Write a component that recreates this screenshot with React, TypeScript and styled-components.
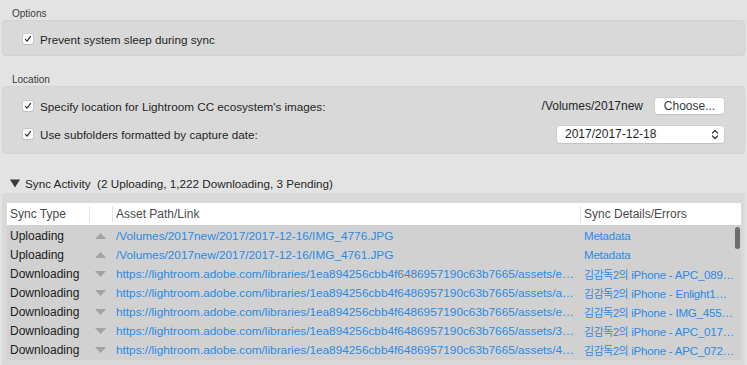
import React from "react";
import styled, { createGlobalStyle } from "styled-components";

const GlobalCSS = createGlobalStyle`
    html, body {
        margin: 0;
        padding: 0;
        background: #e3e3e3;
    }
    body {
        font-family: "Liberation Sans", "Noto Sans CJK KR", sans-serif;
        color: #262626;
        font-size: 12px;
    }
`;

const PageCSS = styled.div`
    width: 747px;
    height: 365px;
    overflow: hidden;
    padding: 0 2px;
    box-sizing: border-box;
    display: flex;
    flex-direction: column;
`;

const SectionLabelCSS = styled.div<{ $top: number }>`
    padding: ${(p) => p.$top}px 0 1px 10px;
    font-size: 10px;
    line-height: 10px;
    color: #3a3a3a;
`;

const GroupBoxCSS = styled.div<{ $padTop: number; $padBottom: number }>`
    background: #d9d9d9;
    border: 1px solid #d2d2d2;
    border-radius: 4px;
    padding: ${(p) => p.$padTop}px 20px ${(p) => p.$padBottom}px 20px;
    display: flex;
    flex-direction: column;
    gap: 8px;
`;

const OptionRowCSS = styled.div`
    height: 20px;
    display: flex;
    align-items: center;
    justify-content: space-between;
`;

const CheckLabelCSS = styled.label`
    display: flex;
    align-items: center;
    gap: 7px;
    font-size: 11.7px;
    color: #262626;
`;

const CheckBoxCSS = styled.span`
    width: 10px;
    height: 10px;
    border-radius: 2px;
    background: #ffffff;
    box-shadow: 0 0 0 0.5px #b8b8b8, 0 1px 1px rgba(0, 0, 0, 0.12);
    display: flex;
    align-items: center;
    justify-content: center;
`;

const RightGroupCSS = styled.div`
    display: flex;
    align-items: center;
    gap: 12px;
`;

const PathTextCSS = styled.span`
    font-size: 12px;
    color: #262626;
`;

const ButtonCSS = styled.div`
    width: 69px;
    height: 16px;
    background: #ffffff;
    border-radius: 3px;
    box-shadow: 0 0 0 0.5px #c4c4c4, 0 1px 1px rgba(0, 0, 0, 0.12);
    display: flex;
    align-items: center;
    justify-content: center;
    font-size: 12px;
    color: #3a3a3a;
`;

const SelectCSS = styled.div`
    width: 167px;
    height: 17px;
    background: #ffffff;
    border-radius: 3px;
    box-shadow: 0 0 0 0.5px #c4c4c4, 0 1px 1px rgba(0, 0, 0, 0.12);
    display: flex;
    align-items: center;
    justify-content: space-between;
    padding: 0 5px 0 8px;
    box-sizing: border-box;
    font-size: 12px;
    color: #262626;
`;

const SyncHeaderCSS = styled.div`
    margin-top: 21px;
    margin-bottom: 2px;
    height: 16px;
    padding-left: 8px;
    display: flex;
    align-items: center;
    gap: 5px;
    font-size: 11.7px;
    color: #262626;
    white-space: pre;
`;

const PanelCSS = styled.div`
    flex: 1;
    background: #d9d9d9;
    border-radius: 4px 4px 0 0;
    padding: 10px 4px 0 5px;
    display: flex;
    flex-direction: column;
`;

const GRID = "82px 23px 468px 1fr";

const TableHeadCSS = styled.div`
    display: grid;
    grid-template-columns: ${GRID};
    height: 22px;
    background: #ffffff;
    align-items: center;
    font-size: 12px;
    color: #4a4a4a;
`;

const HeadCellCSS = styled.div<{ $divider?: boolean }>`
    height: 16px;
    line-height: 16px;
    padding-left: 3px;
    border-left: ${(p) => (p.$divider ? "1px solid #e2e2e2" : "none")};
`;

const BodyCSS = styled.div`
    position: relative;
    background: #d1d1d1;
    height: 134px;
    padding-top: 1px;
`;

const RowCSS = styled.div`
    display: grid;
    grid-template-columns: ${GRID};
    height: 19px;
    align-items: center;
    font-size: 12px;
`;

const TypeCellCSS = styled.div`
    padding-left: 3px;
    color: #202020;
    white-space: nowrap;
`;

const LinkCellCSS = styled.div<{ $info?: boolean }>`
    padding-left: 4px;
    color: #2a8be6;
    white-space: nowrap;
    font-size: ${(p) => (p.$info ? "11.5px" : "11.8px")};
    letter-spacing: ${(p) => (p.$info ? "-0.2px" : "0")};
`;

const KoreanCSS = styled.span`
    font-size: 10.8px;
    letter-spacing: -0.3px;
`;

const ArrowCellCSS = styled.div`
    display: flex;
    justify-content: center;
    align-items: center;
`;

const ScrollThumbCSS = styled.div`
    position: absolute;
    right: 1px;
    top: 2px;
    width: 5px;
    height: 22px;
    border-radius: 3px;
    background: #6d6d6d;
`;

function Check() {
    return (
        <CheckBoxCSS>
            <svg width="8" height="8" viewBox="0 0 8 8">
                <path d="M1.4 4.3 L3.1 6.1 L6.6 1.4" fill="none" stroke="#2b2b2b" strokeWidth="1.2" strokeLinecap="round" strokeLinejoin="round" />
            </svg>
        </CheckBoxCSS>
    );
}

function Arrow({ up }: { up: boolean }) {
    return (
        <svg width="11" height="6" viewBox="0 0 11 6">
            <path d={up ? "M0 6 L5.5 0 L11 6 Z" : "M0 0 L11 0 L5.5 6 Z"} fill="#a3a3a3" />
        </svg>
    );
}

const URL = "https://lightroom.adobe.com/libraries/1ea894256cbb4f6486957190c63b7665/assets/";

const rows = [
    { type: "Uploading", up: true, path: "/Volumes/2017new/2017/2017-12-16/IMG_4776.JPG", device: "", info: "Metadata" },
    { type: "Uploading", up: true, path: "/Volumes/2017new/2017/2017-12-16/IMG_4761.JPG", device: "", info: "Metadata" },
    { type: "Downloading", up: false, path: URL + "e…", device: "김감독2의", info: " iPhone - APC_089…" },
    { type: "Downloading", up: false, path: URL + "a…", device: "김감독2의", info: " iPhone - Enlight1…" },
    { type: "Downloading", up: false, path: URL + "e…", device: "김감독2의", info: " iPhone - IMG_455…" },
    { type: "Downloading", up: false, path: URL + "3…", device: "김감독2의", info: " iPhone - APC_017…" },
    { type: "Downloading", up: false, path: URL + "4…", device: "김감독2의", info: " iPhone - APC_072…" },
];

export default function App() {
    return (
        <PageCSS>
            <GlobalCSS />
            <SectionLabelCSS $top={9}>Options</SectionLabelCSS>
            <GroupBoxCSS $padTop={8} $padBottom={6}>
                <OptionRowCSS>
                    <CheckLabelCSS>
                        <Check />
                        Prevent system sleep during sync
                    </CheckLabelCSS>
                </OptionRowCSS>
            </GroupBoxCSS>

            <SectionLabelCSS $top={19}>Location</SectionLabelCSS>
            <GroupBoxCSS $padTop={9} $padBottom={9}>
                <OptionRowCSS>
                    <CheckLabelCSS>
                        <Check />
                        Specify location for Lightroom CC ecosystem's images:
                    </CheckLabelCSS>
                    <RightGroupCSS>
                        <PathTextCSS>/Volumes/2017new</PathTextCSS>
                        <ButtonCSS>Choose...</ButtonCSS>
                    </RightGroupCSS>
                </OptionRowCSS>
                <OptionRowCSS>
                    <CheckLabelCSS>
                        <Check />
                        Use subfolders formatted by capture date:
                    </CheckLabelCSS>
                    <SelectCSS>
                        2017/2017-12-18
                        <svg width="8" height="11" viewBox="0 0 8 11">
                            <path d="M1.5 4 L4 1.5 L6.5 4 M1.5 7 L4 9.5 L6.5 7" fill="none" stroke="#333" strokeWidth="1.2" strokeLinecap="round" strokeLinejoin="round" />
                        </svg>
                    </SelectCSS>
                </OptionRowCSS>
            </GroupBoxCSS>

            <SyncHeaderCSS>
                <svg width="10" height="9" viewBox="0 0 10 9">
                    <path d="M0 0.5 L10 0.5 L5 8.5 Z" fill="#3a3a3a" />
                </svg>
                {"Sync Activity  (2 Uploading, 1,222 Downloading, 3 Pending)"}
            </SyncHeaderCSS>

            <PanelCSS>
                <TableHeadCSS>
                    <HeadCellCSS>Sync Type</HeadCellCSS>
                    <HeadCellCSS $divider />
                    <HeadCellCSS $divider>Asset Path/Link</HeadCellCSS>
                    <HeadCellCSS $divider>Sync Details/Errors</HeadCellCSS>
                </TableHeadCSS>
                <BodyCSS>
                    {rows.map((r, i) => (
                        <RowCSS key={i}>
                            <TypeCellCSS>{r.type}</TypeCellCSS>
                            <ArrowCellCSS>
                                <Arrow up={r.up} />
                            </ArrowCellCSS>
                            <LinkCellCSS>{r.path}</LinkCellCSS>
                            <LinkCellCSS $info>
                                {r.device && <KoreanCSS>{r.device}</KoreanCSS>}
                                {r.info}
                            </LinkCellCSS>
                        </RowCSS>
                    ))}
                    <ScrollThumbCSS />
                </BodyCSS>
            </PanelCSS>
        </PageCSS>
    );
}
